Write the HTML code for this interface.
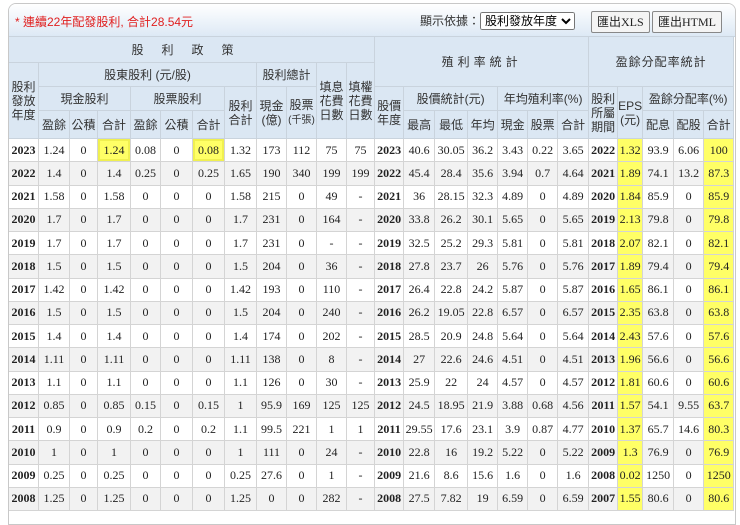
<!DOCTYPE html>
<html><head><meta charset="utf-8">
<style>
body{margin:0;background:#fff;width:740px;height:512px;overflow:hidden;font-family:"Liberation Sans","Noto Sans CJK TC",sans-serif;}
.panel{position:absolute;left:8px;top:3px;width:726px;height:520px;border:1px solid #c8c8c8;border-radius:8px 8px 0 0;overflow:hidden;}
.bar{height:32px;background:linear-gradient(#ffffff,#dde9f5);position:relative;border-bottom:1px solid #c5d5e5;}
.bar .t{position:absolute;left:6px;top:9px;color:#e02020;font-size:12px;}
.bar .sel{position:absolute;left:411px;top:8px;font-size:12px;color:#333;}
.bar select{font-size:12px;height:18px;font-family:"Liberation Sans","Noto Sans CJK TC",sans-serif;}
.btn{position:absolute;top:7px;height:20px;border:1px solid #888;border-radius:2px;background:#f4f4f4;font-family:"Liberation Serif","Noto Sans CJK TC",serif;font-size:12px;line-height:20px;padding:0 5px;color:#222;}
table{border-collapse:collapse;table-layout:fixed;width:726px;position:absolute;left:-1px;top:32px;}
th{background:#dbe7f3;color:#333;font-weight:normal;font-size:12px;border:1px solid #c9d3dd;padding:0;line-height:14px;}
td{border:1px solid #d4d4d4;font-family:"Liberation Serif",serif;font-size:12px;text-align:center;height:22.25px;padding:0;color:#222;}
td.y{font-weight:bold;}
tr.g td{background:#f2f2f2;}
td.h{background:#ffff66 !important;}
td.hb{background:#ffff66 !important;box-shadow:inset 0 0 0 2px #f0f050;}
</style></head><body>
<div class="panel">
<div class="bar"><span class="t">* 連續22年配發股利, 合計28.54元</span>
<span class="sel">顯示依據：<select><option>股利發放年度</option></select></span>
<span class="btn" style="left:582px">匯出XLS</span><span class="btn" style="left:643px">匯出HTML</span></div>
<table>
<colgroup><col style="width:30px"><col style="width:31px"><col style="width:28px"><col style="width:33px"><col style="width:30px"><col style="width:32px"><col style="width:32px"><col style="width:32px"><col style="width:30px"><col style="width:30px"><col style="width:30px"><col style="width:28px"><col style="width:29px"><col style="width:31px"><col style="width:33px"><col style="width:30px"><col style="width:30px"><col style="width:30px"><col style="width:31px"><col style="width:29px"><col style="width:25px"><col style="width:31px"><col style="width:30px"><col style="width:30px"></colgroup>
<tr style="height:26px"><th colspan="12" style="letter-spacing:18px">股利政策</th><th colspan="7" rowspan="2" style="letter-spacing:4px">殖利率統計</th><th colspan="5" rowspan="2" style="letter-spacing:1px">盈餘分配率統計</th></tr>
<tr style="height:24px"><th rowspan="3">股利<br>發放<br>年度</th><th colspan="7">股東股利 (元/股)</th><th colspan="2">股利總計</th><th rowspan="3">填息<br>花費<br>日數</th><th rowspan="3">填權<br>花費<br>日數</th></tr>
<tr style="height:24px"><th colspan="3">現金股利</th><th colspan="3">股票股利</th><th rowspan="2">股利<br>合計</th><th rowspan="2">現金<br>(億)</th><th rowspan="2">股票<br><span style="font-size:10px">(千張)</span></th><th rowspan="2">股價<br>年度</th><th colspan="3">股價統計(元)</th><th colspan="3">年均殖利率(%)</th><th rowspan="2">股利<br>所屬<br>期間</th><th rowspan="2">EPS<br>(元)</th><th colspan="3">盈餘分配率(%)</th></tr>
<tr style="height:28px"><th>盈餘</th><th>公積</th><th>合計</th><th>盈餘</th><th>公積</th><th>合計</th><th>最高</th><th>最低</th><th>年均</th><th>現金</th><th>股票</th><th>合計</th><th>配息</th><th>配股</th><th>合計</th></tr>
<tr><td class="y">2023</td><td>1.24</td><td>0</td><td class="hb">1.24</td><td>0.08</td><td>0</td><td class="hb">0.08</td><td>1.32</td><td>173</td><td>112</td><td>75</td><td>75</td><td class="y">2023</td><td>40.6</td><td>30.05</td><td>36.2</td><td>3.43</td><td>0.22</td><td>3.65</td><td class="y">2022</td><td class="h">1.32</td><td>93.9</td><td>6.06</td><td class="h">100</td></tr>
<tr class="g"><td class="y">2022</td><td>1.4</td><td>0</td><td>1.4</td><td>0.25</td><td>0</td><td>0.25</td><td>1.65</td><td>190</td><td>340</td><td>199</td><td>199</td><td class="y">2022</td><td>45.4</td><td>28.4</td><td>35.6</td><td>3.94</td><td>0.7</td><td>4.64</td><td class="y">2021</td><td class="h">1.89</td><td>74.1</td><td>13.2</td><td class="h">87.3</td></tr>
<tr><td class="y">2021</td><td>1.58</td><td>0</td><td>1.58</td><td>0</td><td>0</td><td>0</td><td>1.58</td><td>215</td><td>0</td><td>49</td><td>-</td><td class="y">2021</td><td>36</td><td>28.15</td><td>32.3</td><td>4.89</td><td>0</td><td>4.89</td><td class="y">2020</td><td class="h">1.84</td><td>85.9</td><td>0</td><td class="h">85.9</td></tr>
<tr class="g"><td class="y">2020</td><td>1.7</td><td>0</td><td>1.7</td><td>0</td><td>0</td><td>0</td><td>1.7</td><td>231</td><td>0</td><td>164</td><td>-</td><td class="y">2020</td><td>33.8</td><td>26.2</td><td>30.1</td><td>5.65</td><td>0</td><td>5.65</td><td class="y">2019</td><td class="h">2.13</td><td>79.8</td><td>0</td><td class="h">79.8</td></tr>
<tr><td class="y">2019</td><td>1.7</td><td>0</td><td>1.7</td><td>0</td><td>0</td><td>0</td><td>1.7</td><td>231</td><td>0</td><td>-</td><td>-</td><td class="y">2019</td><td>32.5</td><td>25.2</td><td>29.3</td><td>5.81</td><td>0</td><td>5.81</td><td class="y">2018</td><td class="h">2.07</td><td>82.1</td><td>0</td><td class="h">82.1</td></tr>
<tr class="g"><td class="y">2018</td><td>1.5</td><td>0</td><td>1.5</td><td>0</td><td>0</td><td>0</td><td>1.5</td><td>204</td><td>0</td><td>36</td><td>-</td><td class="y">2018</td><td>27.8</td><td>23.7</td><td>26</td><td>5.76</td><td>0</td><td>5.76</td><td class="y">2017</td><td class="h">1.89</td><td>79.4</td><td>0</td><td class="h">79.4</td></tr>
<tr><td class="y">2017</td><td>1.42</td><td>0</td><td>1.42</td><td>0</td><td>0</td><td>0</td><td>1.42</td><td>193</td><td>0</td><td>110</td><td>-</td><td class="y">2017</td><td>26.4</td><td>22.8</td><td>24.2</td><td>5.87</td><td>0</td><td>5.87</td><td class="y">2016</td><td class="h">1.65</td><td>86.1</td><td>0</td><td class="h">86.1</td></tr>
<tr class="g"><td class="y">2016</td><td>1.5</td><td>0</td><td>1.5</td><td>0</td><td>0</td><td>0</td><td>1.5</td><td>204</td><td>0</td><td>240</td><td>-</td><td class="y">2016</td><td>26.2</td><td>19.05</td><td>22.8</td><td>6.57</td><td>0</td><td>6.57</td><td class="y">2015</td><td class="h">2.35</td><td>63.8</td><td>0</td><td class="h">63.8</td></tr>
<tr><td class="y">2015</td><td>1.4</td><td>0</td><td>1.4</td><td>0</td><td>0</td><td>0</td><td>1.4</td><td>174</td><td>0</td><td>202</td><td>-</td><td class="y">2015</td><td>28.5</td><td>20.9</td><td>24.8</td><td>5.64</td><td>0</td><td>5.64</td><td class="y">2014</td><td class="h">2.43</td><td>57.6</td><td>0</td><td class="h">57.6</td></tr>
<tr class="g"><td class="y">2014</td><td>1.11</td><td>0</td><td>1.11</td><td>0</td><td>0</td><td>0</td><td>1.11</td><td>138</td><td>0</td><td>8</td><td>-</td><td class="y">2014</td><td>27</td><td>22.6</td><td>24.6</td><td>4.51</td><td>0</td><td>4.51</td><td class="y">2013</td><td class="h">1.96</td><td>56.6</td><td>0</td><td class="h">56.6</td></tr>
<tr><td class="y">2013</td><td>1.1</td><td>0</td><td>1.1</td><td>0</td><td>0</td><td>0</td><td>1.1</td><td>126</td><td>0</td><td>30</td><td>-</td><td class="y">2013</td><td>25.9</td><td>22</td><td>24</td><td>4.57</td><td>0</td><td>4.57</td><td class="y">2012</td><td class="h">1.81</td><td>60.6</td><td>0</td><td class="h">60.6</td></tr>
<tr class="g"><td class="y">2012</td><td>0.85</td><td>0</td><td>0.85</td><td>0.15</td><td>0</td><td>0.15</td><td>1</td><td>95.9</td><td>169</td><td>125</td><td>125</td><td class="y">2012</td><td>24.5</td><td>18.95</td><td>21.9</td><td>3.88</td><td>0.68</td><td>4.56</td><td class="y">2011</td><td class="h">1.57</td><td>54.1</td><td>9.55</td><td class="h">63.7</td></tr>
<tr><td class="y">2011</td><td>0.9</td><td>0</td><td>0.9</td><td>0.2</td><td>0</td><td>0.2</td><td>1.1</td><td>99.5</td><td>221</td><td>1</td><td>1</td><td class="y">2011</td><td>29.55</td><td>17.6</td><td>23.1</td><td>3.9</td><td>0.87</td><td>4.77</td><td class="y">2010</td><td class="h">1.37</td><td>65.7</td><td>14.6</td><td class="h">80.3</td></tr>
<tr class="g"><td class="y">2010</td><td>1</td><td>0</td><td>1</td><td>0</td><td>0</td><td>0</td><td>1</td><td>111</td><td>0</td><td>24</td><td>-</td><td class="y">2010</td><td>22.8</td><td>16</td><td>19.2</td><td>5.22</td><td>0</td><td>5.22</td><td class="y">2009</td><td class="h">1.3</td><td>76.9</td><td>0</td><td class="h">76.9</td></tr>
<tr><td class="y">2009</td><td>0.25</td><td>0</td><td>0.25</td><td>0</td><td>0</td><td>0</td><td>0.25</td><td>27.6</td><td>0</td><td>1</td><td>-</td><td class="y">2009</td><td>21.6</td><td>8.6</td><td>15.6</td><td>1.6</td><td>0</td><td>1.6</td><td class="y">2008</td><td class="h">0.02</td><td>1250</td><td>0</td><td class="h">1250</td></tr>
<tr class="g"><td class="y">2008</td><td>1.25</td><td>0</td><td>1.25</td><td>0</td><td>0</td><td>0</td><td>1.25</td><td>0</td><td>0</td><td>282</td><td>-</td><td class="y">2008</td><td>27.5</td><td>7.82</td><td>19</td><td>6.59</td><td>0</td><td>6.59</td><td class="y">2007</td><td class="h">1.55</td><td>80.6</td><td>0</td><td class="h">80.6</td></tr>
</table>
</div>
</body></html>
